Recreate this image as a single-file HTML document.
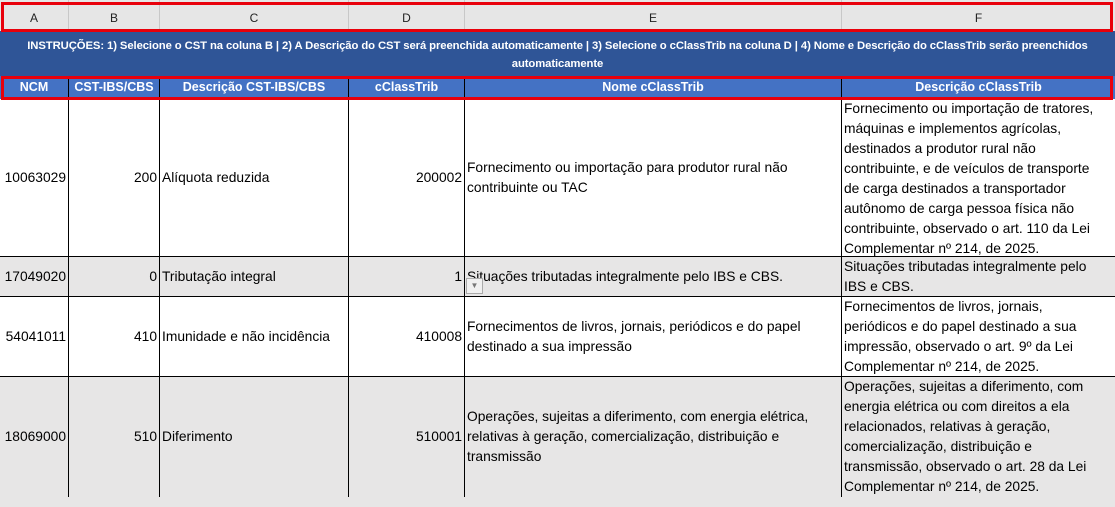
<!DOCTYPE html>
<html><head><meta charset="utf-8"><style>
*{margin:0;padding:0;box-sizing:border-box}
body{width:1115px;height:483px;overflow:hidden;background:#fff;font-family:"Liberation Sans",sans-serif;font-size:13.8px;color:#000;position:relative}
.a{position:absolute}
.colh{top:0;height:31px;background:#e6e6e6;}
.colh div{position:absolute;top:0;height:31px;line-height:36px;text-align:center;border-right:1px solid #c8c8c8;font-size:12px;color:#222}
.band{top:31px;left:0;width:1115px;height:45px;background:#2f5597;color:#fff;font-weight:bold;font-size:11.3px;text-align:center;line-height:18px;padding-top:6px;letter-spacing:-0.1px;white-space:nowrap}
.hdr{top:76px;left:0;width:1115px;height:23px;background:#4472c4}
.hdr div{position:absolute;top:0;height:23px;line-height:22px;text-align:center;color:#fff;font-weight:bold;border-right:1px solid #000;font-size:12.5px}
.red{position:absolute;border:3px solid #e8000b}
.row{position:absolute;left:0;width:1115px;border-bottom:1.5px solid #000}
.c{position:absolute;top:0;bottom:0;border-right:1.5px solid #000;display:flex;align-items:center;line-height:20px;padding:0 2px;overflow:hidden;white-space:nowrap}
.r{justify-content:flex-end}
.f{align-items:flex-start;padding-top:0}
</style></head><body>
<div class="a colh" style="left:0;width:1115px">
<div style="left:0;width:69px">A</div><div style="left:69px;width:91px">B</div><div style="left:160px;width:189px">C</div><div style="left:349px;width:116px">D</div><div style="left:465px;width:377px">E</div><div style="left:842px;width:273px;border:none">F</div>
</div>
<div class="a band">INSTRUÇÕES: 1) Selecione o CST na coluna B | 2) A Descrição do CST será preenchida automaticamente | 3) Selecione o cClassTrib na coluna D | 4) Nome e Descrição do cClassTrib serão preenchidos<br>automaticamente</div>
<div class="a hdr">
<div style="left:0;width:69px">NCM</div><div style="left:69px;width:91px">CST-IBS/CBS</div><div style="left:160px;width:189px">Descrição CST-IBS/CBS</div><div style="left:349px;width:116px">cClassTrib</div><div style="left:465px;width:377px">Nome cClassTrib</div><div style="left:842px;width:273px;border:none">Descrição cClassTrib</div>
</div>

<div class="row" style="top:99px;height:158px;background:#fff">
<div class="c r" style="left:0;width:69px">10063029</div><div class="c r" style="left:69px;width:91px">200</div><div class="c" style="left:160px;width:189px">Alíquota reduzida</div><div class="c r" style="left:349px;width:116px">200002</div><div class="c" style="left:465px;width:377px">Fornecimento ou importação para produtor rural não<br>contribuinte ou TAC</div><div class="c f" style="left:842px;width:273px;border:none">Fornecimento ou importação de tratores,<br>máquinas e implementos agrícolas,<br>destinados a produtor rural não<br>contribuinte, e de veículos de transporte<br>de carga destinados a transportador<br>autônomo de carga pessoa física não<br>contribuinte, observado o art. 110 da Lei<br>Complementar nº 214, de 2025.</div>
</div>
<div class="row" style="top:257px;height:40px;background:#e7e6e6">
<div class="c r" style="left:0;width:69px">17049020</div><div class="c r" style="left:69px;width:91px">0</div><div class="c" style="left:160px;width:189px">Tributação integral</div><div class="c r" style="left:349px;width:116px">1</div><div class="c" style="left:465px;width:377px">Situações tributadas integralmente pelo IBS e CBS.</div><div class="c f" style="left:842px;width:273px;border:none">Situações tributadas integralmente pelo<br>IBS e CBS.</div>
</div>
<div class="a" style="left:466px;top:278px;width:17px;height:16px;background:#f0f0f0;border:1px solid #aaa;color:#777;font-size:8px;text-align:center;line-height:14px">▼</div>
<div class="row" style="top:297px;height:80px;background:#fff">
<div class="c r" style="left:0;width:69px">54041011</div><div class="c r" style="left:69px;width:91px">410</div><div class="c" style="left:160px;width:189px">Imunidade e não incidência</div><div class="c r" style="left:349px;width:116px">410008</div><div class="c" style="left:465px;width:377px">Fornecimentos de livros, jornais, periódicos e do papel<br>destinado a sua impressão</div><div class="c f" style="left:842px;width:273px;border:none">Fornecimentos de livros, jornais,<br>periódicos e do papel destinado a sua<br>impressão, observado o art. 9º da Lei<br>Complementar nº 214, de 2025.</div>
</div>
<div class="row" style="top:377px;height:130px;background:#e7e6e6;border:none">
<div class="c r" style="left:0;width:69px;height:120px">18069000</div><div class="c r" style="left:69px;width:91px;height:120px">510</div><div class="c" style="left:160px;width:189px;height:120px">Diferimento</div><div class="c r" style="left:349px;width:116px;height:120px">510001</div><div class="c" style="left:465px;width:377px;height:120px">Operações, sujeitas a diferimento, com energia elétrica,<br>relativas à geração, comercialização, distribuição e<br>transmissão</div><div class="c f" style="left:842px;width:273px;border:none">Operações, sujeitas a diferimento, com<br>energia elétrica ou com direitos a ela<br>relacionados, relativas à geração,<br>comercialização, distribuição e<br>transmissão, observado o art. 28 da Lei<br>Complementar nº 214, de 2025.</div>
</div>

<div class="red" style="left:1px;top:2px;width:1112px;height:30px"></div>
<div class="red" style="left:1px;top:76px;width:1112px;height:24px"></div>
</body></html>
